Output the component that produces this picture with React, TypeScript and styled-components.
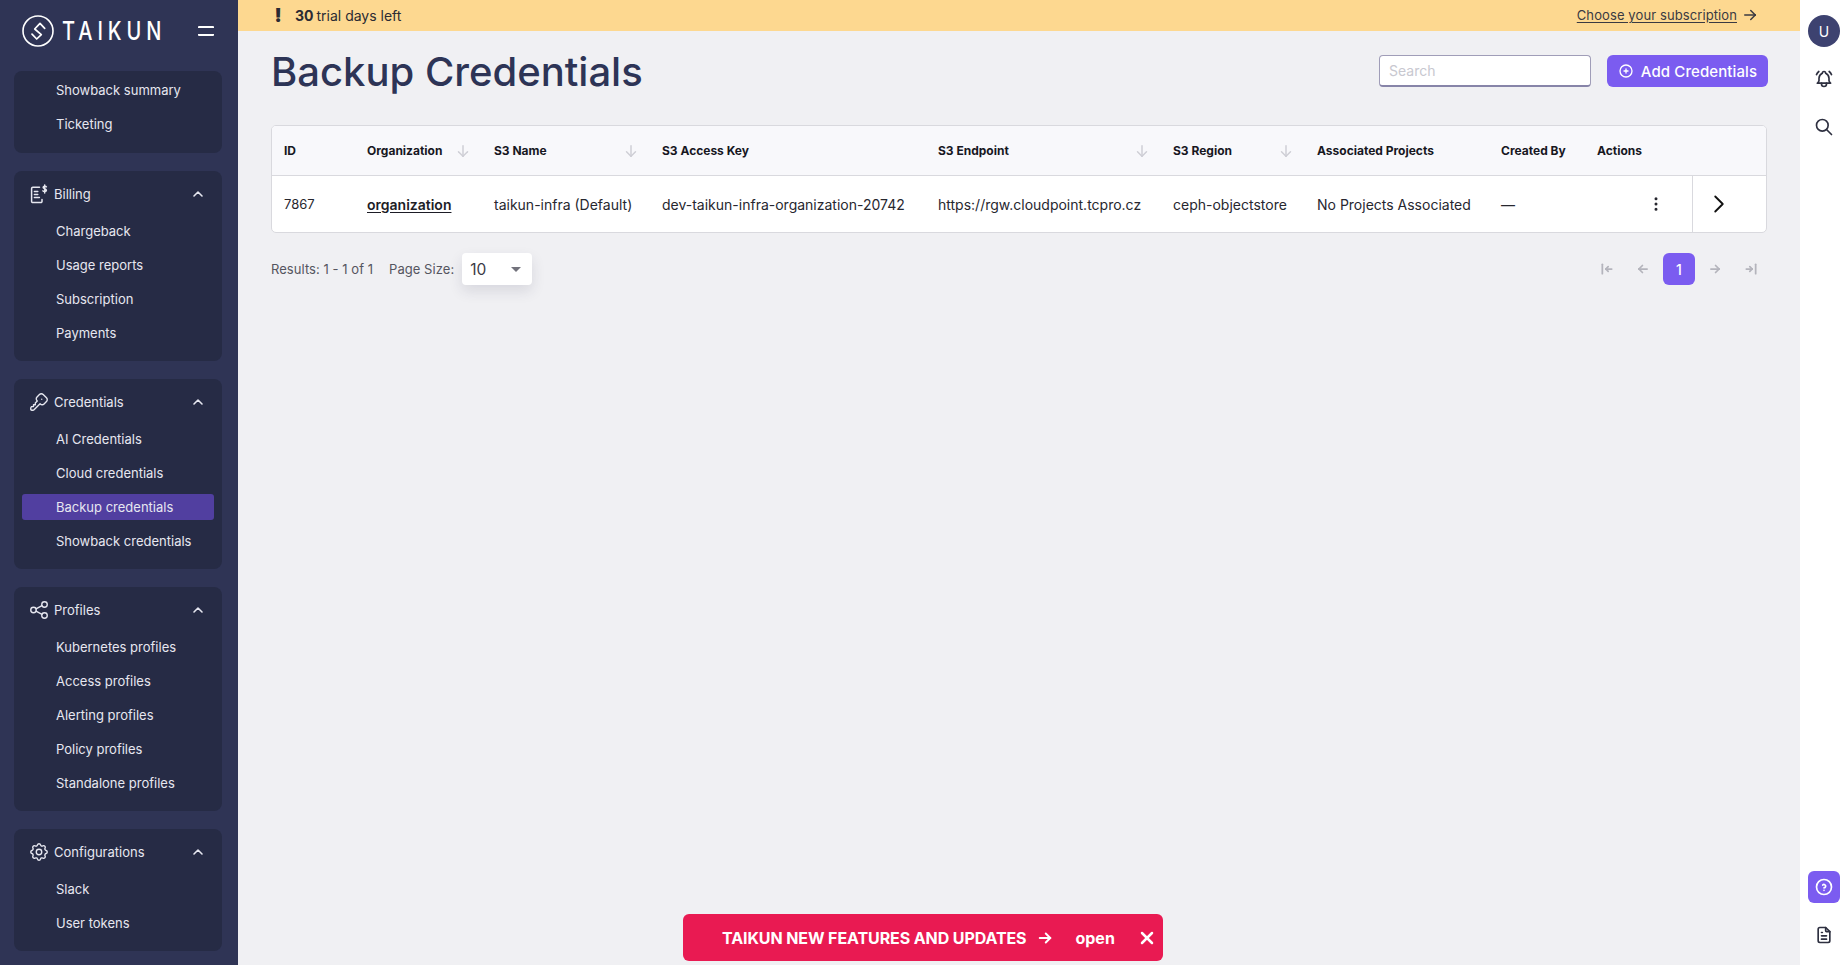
import React from 'react';
import styled, { createGlobalStyle } from 'styled-components';
import {
  TbArrowBarToLeft,
  TbArrowBarToRight,
  TbArrowDown,
  TbArrowLeft,
  TbArrowRight,
  TbBellRinging,
  TbChevronRight,
  TbChevronUp,
  TbCirclePlus,
  TbDotsVertical,
  TbFileText,
  TbHelpCircle,
  TbKey,
  TbSearch,
  TbSettings,
  TbShare,
  TbX,
} from 'react-icons/tb';

const FONT = `Inter, "Noto Sans", "Liberation Sans", sans-serif`;
const PURPLE = '#7b5cf0';

const GlobalStyle = createGlobalStyle`
  html, body {
    margin: 0;
    padding: 0;
    height: 100%;
    overflow: hidden;
    font-family: ${FONT};
    background: #f0f0f3;
  }
  * { box-sizing: border-box; }
`;

const Shell = styled.div`
  display: flex;
  width: 100%;
  height: 965px;
  overflow: hidden;
`;

/* sidebar */
const Sidebar = styled.aside`
  flex: 0 0 238px;
  height: 100%;
  background: #2f3455;
  display: flex;
  flex-direction: column;
  overflow: hidden;
`;

const LogoRow = styled.div`
  flex: 0 0 71px;
  display: flex;
  align-items: center;
  padding: 0 24px 9px 22px;
`;

const LogoText = styled.span`
  margin-left: 8px;
  color: #fff;
  font-size: 25px;
  font-weight: 500;
  letter-spacing: 6.2px;
  line-height: 1;
  transform: scaleX(0.8);
  transform-origin: left center;
`;

const MenuToggle = styled.button`
  margin-left: auto;
  padding: 0;
  width: 16px;
  height: 10px;
  background: none;
  border: solid #fff;
  border-width: 2px 0;
  border-radius: 1px;
`;

const NavList = styled.nav`
  display: flex;
  flex-direction: column;
  gap: 18px;
  padding: 0 16px 0 14px;
`;

const Group = styled.section`
  background: #262b45;
  border-radius: 8px;
  padding: 0 8px 11px;
`;

const ClippedGroup = styled(Group)`
  padding-top: 2px;
  padding-bottom: 12px;
`;

const GroupHeader = styled.div`
  height: 43px;
  display: flex;
  align-items: center;
  color: #e6e7f0;
  font-size: 13px;
  padding: 3px 0 0 8px;
`;

const GroupIcon = styled.span`
  flex: 0 0 24px;
  display: flex;
  align-items: center;
  justify-content: center;
  margin-right: 3px;
  margin-left: -3px;
  svg { display: block; stroke-width: 1.5; }
`;

const Collapse = styled(TbChevronUp)`
  margin-left: auto;
  margin-right: 8px;
  font-size: 16px;
  stroke-width: 2.4;
`;

const NavItem = styled.a<{ $active?: boolean }>`
  display: flex;
  align-items: center;
  height: 34px;
  padding-left: 34px;
  color: #e6e7f0;
  font-size: 13px;
  position: relative;
  z-index: 0;
  &::before {
    content: '';
    display: ${(p) => (p.$active ? 'block' : 'none')};
    position: absolute;
    z-index: -1;
    left: 0;
    right: 0;
    top: 4px;
    bottom: 4px;
    border-radius: 3px;
    background: #513fa0;
  }
`;

/* main column */
const Main = styled.main`
  flex: 1;
  min-width: 0;
  display: flex;
  flex-direction: column;
`;

const TrialBar = styled.div`
  flex: 0 0 31px;
  background: #fdd890;
  display: flex;
  align-items: center;
  justify-content: space-between;
  padding: 0 41px 1px 35px;
  color: #2b2b33;
  font-size: 14px;
`;

const TrialLeft = styled.div`
  display: flex;
  align-items: center;
`;

const Bang = styled.span`
  width: 10px;
  margin-right: 12px;
  text-align: center;
  font-size: 19px;
  font-weight: 900;
  line-height: 1;
`;

const Days = styled.strong`
  font-weight: 700;
  margin-right: 3px;
`;

const SubscriptionLink = styled.a`
  display: flex;
  align-items: center;
  gap: 4px;
  font-size: 13px;
  letter-spacing: 0.1px;
  color: #3a3a42;
  span {
    text-decoration: underline;
    text-underline-offset: 2px;
  }
`;

const Content = styled.div`
  padding: 24px 32px 0 33px;
`;

const TitleRow = styled.div`
  display: flex;
  align-items: center;
  height: 32px;
`;

const Title = styled.h1`
  margin: 0;
  padding-top: 2px;
  color: #2d3456;
  font-size: 40px;
  font-weight: 500;
  line-height: 1;
  white-space: nowrap;
`;

const SearchInput = styled.input`
  margin-left: auto;
  width: 212px;
  height: 32px;
  padding: 0 9px;
  font-family: ${FONT};
  font-size: 14px;
  background: #fff;
  border: 1px solid #a09db8;
  border-bottom: 2px solid #8784a8;
  border-radius: 4px;
  outline: none;
  &::placeholder { color: #c8c8d0; }
`;

const AddButton = styled.button`
  margin-left: 16px;
  width: 161px;
  height: 32px;
  display: flex;
  align-items: center;
  justify-content: center;
  gap: 7px;
  border: 0;
  border-radius: 6px;
  background: ${PURPLE};
  color: #fff;
  font-family: ${FONT};
  font-size: 15px;
  font-weight: 500;
  letter-spacing: 0.1px;
  svg { font-size: 16px; }
`;

const COLUMNS = '83px 127px 168px 276px 235px 144px 184px 96px 107px 1fr';

const Table = styled.div`
  margin-top: 38px;
  width: 1496px;
  border: 1px solid #d9d9de;
  border-radius: 5px;
  overflow: hidden;
  background: #fff;
`;

const HeadRow = styled.div`
  display: grid;
  grid-template-columns: ${COLUMNS};
  height: 50px;
  background: #f8f8fb;
  border-bottom: 1px solid #d9d9de;
`;

const BodyRow = styled.div`
  display: grid;
  grid-template-columns: ${COLUMNS};
  height: 56px;
`;

const HeadCell = styled.div`
  display: flex;
  align-items: center;
  justify-content: space-between;
  padding: 0 12px;
  color: #17171f;
  font-size: 12px;
  font-weight: 700;
  white-space: nowrap;
`;

const SortIcon = styled(TbArrowDown)`
  color: #cfcfd6;
  font-size: 18px;
  margin-right: -2px;
`;

const Cell = styled.div<{ $small?: boolean }>`
  display: flex;
  align-items: center;
  padding: 0 12px;
  color: #27272f;
  font-size: ${(p) => (p.$small ? '13px' : '14px')};
  white-space: nowrap;
`;

const OrgLink = styled.a`
  color: #1d1d26;
  font-weight: 600;
  text-decoration: underline;
  text-underline-offset: 2px;
`;

const ActionCell = styled(Cell)`
  justify-content: flex-end;
  padding-right: 27px;
  font-size: 18px;
`;

const ExpandCell = styled(Cell)`
  border-left: 1px solid #d9d9de;
  padding-left: 11px;
  font-size: 30px;
  color: #111;
  svg { stroke-width: 1.5; }
`;

const FooterRow = styled.div`
  display: flex;
  align-items: center;
  height: 32px;
  margin-top: 20px;
  width: 1496px;
  color: #55555f;
  font-size: 13px;
  letter-spacing: 0.05px;
`;

const PageSizeLabel = styled.span`
  margin-left: 16px;
`;

const SizeSelect = styled.div`
  margin-left: 8px;
  width: 70px;
  height: 32px;
  display: flex;
  align-items: center;
  justify-content: space-between;
  padding: 0 11px 0 8px;
  background: #fff;
  border-radius: 4px;
  box-shadow: 0 6px 14px rgba(40, 40, 70, 0.12);
  color: #3a3a45;
  font-size: 15.5px;
  letter-spacing: 0;
`;

const Caret = styled.span`
  width: 0;
  height: 0;
  border-left: 5px solid transparent;
  border-right: 5px solid transparent;
  border-top: 5px solid #72727c;
`;

const Pager = styled.div`
  margin-left: auto;
  display: flex;
  align-items: center;
  gap: 4px;
`;

const PagerArrow = styled.button`
  width: 32px;
  height: 32px;
  padding: 0;
  border: 0;
  background: none;
  display: flex;
  align-items: center;
  justify-content: center;
  color: #b4b4bc;
  font-size: 14px;
  svg { stroke-width: 3; }
`;

const PagerCurrent = styled.button`
  width: 32px;
  height: 32px;
  padding: 0;
  border: 0;
  border-radius: 6px;
  background: ${PURPLE};
  color: #fff;
  font-family: ${FONT};
  font-size: 14px;
  font-weight: 500;
`;

/* right rail */
const Rail = styled.aside`
  flex: 0 0 48px;
  height: 100%;
  background: #fff;
  display: flex;
  flex-direction: column;
  align-items: center;
  padding-top: 15px;
  color: #2e3040;
`;

const Avatar = styled.div`
  width: 32px;
  height: 32px;
  border-radius: 50%;
  background: #3d4270;
  color: #fff;
  display: flex;
  align-items: center;
  justify-content: center;
  font-size: 14px;
`;

const RailIcon = styled.span`
  display: flex;
  margin-top: 22px;
  font-size: 20px;
  & + & { margin-top: 28px; }
`;

const HelpButton = styled.button`
  margin-top: auto;
  width: 32px;
  height: 32px;
  padding: 0;
  border: 0;
  border-radius: 6px;
  background: ${PURPLE};
  color: #fff;
  display: flex;
  align-items: center;
  justify-content: center;
  font-size: 20px;
`;

const FileIcon = styled.span`
  display: flex;
  font-size: 20px;
  margin: 22px 0 20px;
`;

/* floating banner */
const Banner = styled.div`
  position: fixed;
  left: 683px;
  top: 914px;
  width: 480px;
  height: 47px;
  display: flex;
  align-items: center;
  padding-left: 39px;
  background: #e91a52;
  border-radius: 6px;
  color: #fff;
  font-size: 16px;
  font-weight: 700;
`;

const BannerText = styled.span`
  letter-spacing: -0.1px;
  white-space: nowrap;
`;

const BannerArrow = styled(TbArrowRight)`
  margin-left: 10px;
  font-size: 18px;
  stroke-width: 2.6;
`;

const BannerOpen = styled.span`
  margin-left: 21px;
`;

const BannerClose = styled(TbX)`
  margin-left: 22px;
  font-size: 20px;
  stroke-width: 3;
`;

const TaikunMark = () => (
  <svg width="32" height="32" viewBox="0 0 32 32" fill="none" stroke="#fff">
    <circle cx="16" cy="16" r="15" strokeWidth="1.6" />
    <path
      d="M22.7 13.3 L18 8.3 L12.7 14 L19.3 19.6 L14.7 24 L10 19.2"
      strokeWidth="1.7"
      strokeLinejoin="round"
      strokeLinecap="round"
    />
  </svg>
);

const BillingIcon = () => (
  <svg width="20" height="20" viewBox="0 0 20 20" fill="none" stroke="#e6e7f0" strokeWidth="1.3" strokeLinecap="round" strokeLinejoin="round">
    <path d="M10.5 3.2H3.8a1.2 1.2 0 0 0-1.2 1.2v13a1.2 1.2 0 0 0 1.2 1.2h8a1.2 1.2 0 0 0 1.2-1.2v-2" />
    <path d="M5.4 7.5h3.4M5.4 10.5h3.4M5.4 13.5h5" />
    <path d="M17.4 2.8c-.5-.8-2.9-1-3.3.4-.4 1.7 3.4 1.3 3.3 3.2-.1 1.5-2.8 1.5-3.5.4M15.7 1v8" />
  </svg>
);

const billing = ['Chargeback', 'Usage reports', 'Subscription', 'Payments'];
const credentials = ['AI Credentials', 'Cloud credentials', 'Backup credentials', 'Showback credentials'];
const profiles = ['Kubernetes profiles', 'Access profiles', 'Alerting profiles', 'Policy profiles', 'Standalone profiles'];

const NavGroup: React.FC<{ icon: React.ReactNode; label: string; items: string[]; active?: string }> = ({
  icon,
  label,
  items,
  active,
}) => (
  <Group>
    <GroupHeader>
      <GroupIcon>{icon}</GroupIcon>
      {label}
      <Collapse />
    </GroupHeader>
    {items.map((item) => (
      <NavItem key={item} $active={item === active}>
        {item}
      </NavItem>
    ))}
  </Group>
);

const App: React.FC = () => {
  return (
    <Shell>
      <GlobalStyle />
      <Sidebar>
        <LogoRow>
          <TaikunMark />
          <LogoText>TAIKUN</LogoText>
          <MenuToggle aria-label="menu" />
        </LogoRow>
        <NavList>
          <ClippedGroup>
            <NavItem>Showback summary</NavItem>
            <NavItem>Ticketing</NavItem>
          </ClippedGroup>
          <NavGroup icon={<BillingIcon />} label="Billing" items={billing} />
          <NavGroup icon={<TbKey size={22} />} label="Credentials" items={credentials} active="Backup credentials" />
          <NavGroup icon={<TbShare size={22} />} label="Profiles" items={profiles} />
          <NavGroup icon={<TbSettings size={22} />} label="Configurations" items={['Slack', 'User tokens']} />
        </NavList>
      </Sidebar>

      <Main>
        <TrialBar>
          <TrialLeft>
            <Bang>!</Bang>
            <Days>30</Days> trial days left
          </TrialLeft>
          <SubscriptionLink>
            <span>Choose your subscription</span>
            <TbArrowRight size={18} />
          </SubscriptionLink>
        </TrialBar>
        <Content>
          <TitleRow>
            <Title>Backup Credentials</Title>
            <SearchInput placeholder="Search" />
            <AddButton>
              <TbCirclePlus />
              Add Credentials
            </AddButton>
          </TitleRow>

          <Table>
            <HeadRow>
              <HeadCell>ID</HeadCell>
              <HeadCell>
                Organization <SortIcon />
              </HeadCell>
              <HeadCell>
                S3 Name <SortIcon />
              </HeadCell>
              <HeadCell>S3 Access Key</HeadCell>
              <HeadCell>
                S3 Endpoint <SortIcon />
              </HeadCell>
              <HeadCell>
                S3 Region <SortIcon />
              </HeadCell>
              <HeadCell>Associated Projects</HeadCell>
              <HeadCell>Created By</HeadCell>
              <HeadCell>Actions</HeadCell>
              <HeadCell />
            </HeadRow>
            <BodyRow>
              <Cell $small>7867</Cell>
              <Cell>
                <OrgLink>organization</OrgLink>
              </Cell>
              <Cell>taikun-infra (Default)</Cell>
              <Cell>dev-taikun-infra-organization-20742</Cell>
              <Cell>https://rgw.cloudpoint.tcpro.cz</Cell>
              <Cell>ceph-objectstore</Cell>
              <Cell>No Projects Associated</Cell>
              <Cell>—</Cell>
              <ActionCell>
                <TbDotsVertical />
              </ActionCell>
              <ExpandCell>
                <TbChevronRight />
              </ExpandCell>
            </BodyRow>
          </Table>

          <FooterRow>
            <span>Results: 1 - 1 of 1</span>
            <PageSizeLabel>Page Size:</PageSizeLabel>
            <SizeSelect>
              10
              <Caret />
            </SizeSelect>
            <Pager>
              <PagerArrow>
                <TbArrowBarToLeft />
              </PagerArrow>
              <PagerArrow>
                <TbArrowLeft />
              </PagerArrow>
              <PagerCurrent>1</PagerCurrent>
              <PagerArrow>
                <TbArrowRight />
              </PagerArrow>
              <PagerArrow>
                <TbArrowBarToRight />
              </PagerArrow>
            </Pager>
          </FooterRow>
        </Content>
      </Main>

      <Rail>
        <Avatar>U</Avatar>
        <RailIcon>
          <TbBellRinging />
        </RailIcon>
        <RailIcon>
          <TbSearch />
        </RailIcon>
        <HelpButton>
          <TbHelpCircle />
        </HelpButton>
        <FileIcon>
          <TbFileText />
        </FileIcon>
      </Rail>

      <Banner>
        <BannerText>TAIKUN NEW FEATURES AND UPDATES</BannerText>
        <BannerArrow />
        <BannerOpen>open</BannerOpen>
        <BannerClose />
      </Banner>
    </Shell>
  );
};

export default App;
